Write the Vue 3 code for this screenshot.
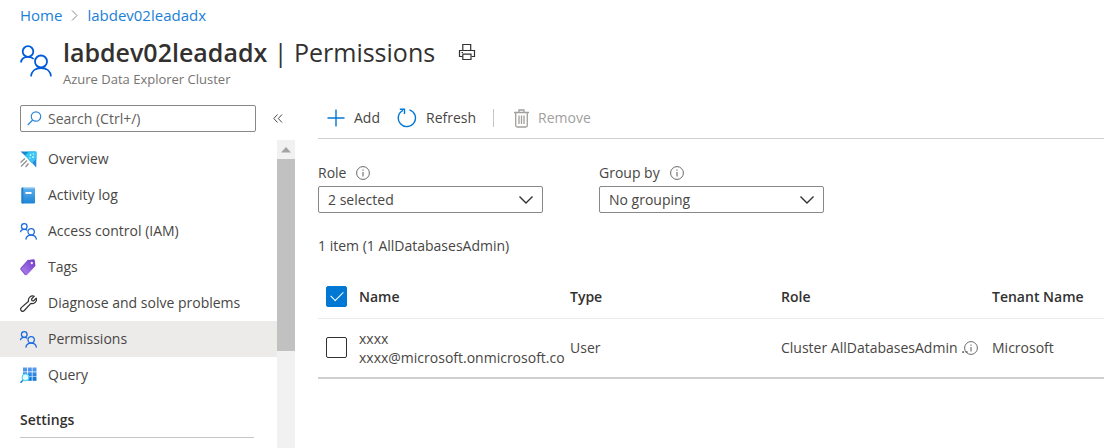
<script setup>
import { ref } from 'vue'

const nav = [
  { label: 'Overview', icon: 'overview' },
  { label: 'Activity log', icon: 'log' },
  { label: 'Access control (IAM)', icon: 'people' },
  { label: 'Tags', icon: 'tag' },
  { label: 'Diagnose and solve problems', icon: 'wrench' },
  { label: 'Permissions', icon: 'people', active: true },
  { label: 'Query', icon: 'query' },
]
const allChecked = ref(true)
const rowChecked = ref(false)
</script>

<template>
  <div class="page">
    <svg class="defs" width="0" height="0" aria-hidden="true">
      <defs>
        <linearGradient id="gBook" x1="0" y1="0" x2="0" y2="1">
          <stop offset="0" stop-color="#5fb0ee" /><stop offset="1" stop-color="#1c86d8" />
        </linearGradient>
        <linearGradient id="gTag" x1="1" y1="0" x2="0" y2="1">
          <stop offset="0" stop-color="#6f35c9" /><stop offset="1" stop-color="#b38af0" />
        </linearGradient>
        <linearGradient id="gGrid" x1="0" y1="0" x2="0" y2="1">
          <stop offset="0" stop-color="#5c9cf0" /><stop offset="1" stop-color="#0a74d4" />
        </linearGradient>
        <symbol id="people" viewBox="0 0 32 32">
          <g fill="none" stroke="currentColor">
            <circle cx="8" cy="6.5" r="5.3" />
            <path d="M1 17.5C1.3 13.5 4.3 11.8 8 11.8c2.300 0 4.400.700 5.700 2.200" />
            <circle cx="21" cy="16.500" r="6" />
            <path d="M11 31.300c.600-5.300 4.700-8.300 10-8.300s9.400 3 10 8.300" />
          </g>
        </symbol>
        <symbol id="info" viewBox="0 0 14 14">
          <circle cx="7" cy="7" r="6.400" fill="none" stroke="currentColor" stroke-width="1" />
          <path d="M7 6v4.500M7 3.500v1.300" stroke="currentColor" stroke-width="1.100" />
        </symbol>
        <symbol id="chevron" viewBox="0 0 14 8">
          <path d="M.5.500 7 7 13.500.500" fill="none" stroke="#323130" stroke-width="1.400" />
        </symbol>
      </defs>
    </svg>

    <header class="head">
      <nav class="crumbs" aria-label="Breadcrumb">
        <a href="#">Home</a>
        <svg width="7" height="11" viewBox="0 0 7 11"><path d="M1 .5 6 5.500 1 10.500" fill="none" stroke="#8a8886" /></svg>
        <a href="#">labdev02leadadx</a>
      </nav>
      <div class="titlebar">
        <svg class="title-icon" width="32" height="32"><use href="#people" /></svg>
        <div>
          <div class="title-row">
            <h1><b>labdev02leadadx</b> | Permissions</h1>
            <button class="plain" aria-label="Print">
              <svg width="18" height="18" viewBox="0 0 18 18" fill="none" stroke="#323130" stroke-width="1.200">
                <path d="M4.800 7.500V1.500h7.900v6M4.500 13.500H1.500v-6h15v6h-3" />
                <path d="M4.800 11.200h8.200v5.300H4.800zM3.500 9.500h1.500" />
              </svg>
            </button>
          </div>
          <p class="subtitle">Azure Data Explorer Cluster</p>
        </div>
      </div>
    </header>

    <div class="body">
      <aside class="side">
        <div class="search-row">
          <label class="search">
            <svg width="15" height="15" viewBox="0 0 15 15" fill="none" stroke="#2b88d8" stroke-width="1.200">
              <circle cx="9" cy="5.500" r="4.700" /><path d="M5.700 9 .7 14" />
            </svg>
            <input type="text" placeholder="Search (Ctrl+/)" aria-label="Search" />
          </label>
          <button class="plain" aria-label="Collapse menu">
            <svg width="10" height="9" viewBox="0 0 10 9" fill="none" stroke="#484644">
              <path d="M4.500.5.800 4.500l3.700 4M9 .5 5.300 4.500 9 8.500" />
            </svg>
          </button>
        </div>
        <div class="menu">
          <div class="menu-list">
            <ul>
              <li v-for="n in nav" :key="n.label">
                <a href="#" class="item" :class="{ active: n.active }">
                  <svg v-if="n.icon === 'overview'" width="17" height="17" viewBox="0 0 17 17">
                    <path d="M.5.500H16L8.500 8z" fill="#1b87cf" />
                    <path d="M5 4.500 9 .500h7.300v7.700L12 12z" fill="#32c8f2" />
                    <path d="M16.300 1v15.500L8.500 8.200z" fill="#2489d8" />
                    <path d="m8.500 8.200 7.800-7.700v7.200l-4.200 4.500z" fill="#39c4f4" />
                    <g fill="#d5f6ff"><circle cx="10.500" cy="4" r=".9" /><circle cx="13.500" cy="3" r=".8" /><circle cx="13" cy="6" r=".9" /><circle cx="10" cy="7" r=".8" /></g>
                    <path d="M.5 11.500 5 7.500M1 15.500l6-6M5.500 16l3-3.500" stroke="#949494" stroke-width="1.400" />
                  </svg>
                  <svg v-else-if="n.icon === 'log'" width="17" height="17" viewBox="0 0 17 17">
                    <rect x="1.500" y=".5" width="13.500" height="16" rx="1" fill="url(#gBook)" />
                    <path d="M1.500 1.500v14q0 1 1 1h.8V.5h-.8q-1 0-1 1z" fill="#1f7fc8" />
                    <path d="M3.300 1h11" stroke="#a9d5f5" />
                    <rect x="5.500" y="5" width="6" height="2" fill="#fff" />
                  </svg>
                  <svg v-else-if="n.icon === 'people'" class="blue" width="17" height="17"><use href="#people" /></svg>
                  <svg v-else-if="n.icon === 'tag'" width="17" height="17" viewBox="0 0 17 17">
                    <path d="M8.500.900 13.500.300q1-.1 1.200.9l.7 5q.1.800-.5 1.400L7 15.900q-.7.700-1.400 0L1.200 10.600q-.6-.7 0-1.400z" fill="url(#gTag)" />
                    <path d="M8.500.900 1.200 9.200q-.6.700 0 1.400L5.600 15.900" fill="none" stroke="#8650cc" stroke-width="1.200" />
                    <circle cx="11.800" cy="4" r="1.200" fill="#f3eafd" />
                  </svg>
                  <svg v-else-if="n.icon === 'wrench'" width="17" height="17" viewBox="0 0 17 17">
                    <path d="M14.300 1.200 11.600 4l.3 1.700 1.600.3 2.700-2.800c1 3.400-1.700 6.200-5.300 5.200l-6.600 7.100c-2 2.100-4.900-.600-3-2.900l7.300-6.300C7.600 3 10.800.100 14.300 1.200z" fill="none" stroke="#323130" stroke-width="1.200" stroke-linejoin="round" />
                  </svg>
                  <svg v-else width="17" height="17" viewBox="0 0 17 17">
                    <path d="M3 .5h4v4H3zM7.800.5h4v4h-4zM12.500.5h4v4h-4zM3 5.200h4v4H3zM7.800 5.200h4v4h-4zM12.500 5.200h4v4h-4zM7.800 9.800h4v4h-4zM12.500 9.800h4v4h-4z" fill="url(#gGrid)" />
                    <path d="M3.500 12.500.5 15.800" stroke="#1b7fd0" stroke-width="1.500" />
                    <circle cx="5.500" cy="10.300" r="3.300" fill="#e8fbff" stroke="#50d8f5" stroke-width="1.200" />
                  </svg>
                  <span>{{ n.label }}</span>
                </a>
              </li>
            </ul>
            <h2>Settings</h2>
          </div>
          <div class="scrollbar" aria-hidden="true">
            <div class="arrow"><svg width="10" height="6" viewBox="0 0 10 6"><path d="M0 5.500 5 0l5 5.500z" fill="#a3a3a3" /></svg></div>
            <div class="thumb"></div>
          </div>
        </div>
      </aside>

      <main class="main">
        <div class="toolbar">
          <button class="cmd">
            <svg width="18" height="18" viewBox="0 0 18 18"><path d="M9 .5v17M.5 9h17" stroke="#0078d4" stroke-width="1.400" /></svg>
            <span>Add</span>
          </button>
          <button class="cmd">
            <svg width="20" height="20" viewBox="0 0 20 20" fill="none" stroke="#0078d4" stroke-width="1.400">
              <path d="M12.500 1.800A8.600 8.600 0 1 1 6 2.300M2.800 1.200h4.700v4.700" />
            </svg>
            <span>Refresh</span>
          </button>
          <span class="divider"></span>
          <button class="cmd" disabled>
            <svg width="15" height="19" viewBox="0 0 15 19" fill="none" stroke="#a19f9d" stroke-width="1.300">
              <path d="M0 3.500h15M5 3.500V1h5v2.500M1.700 3.500v13q0 1.500 1.500 1.500h8.600q1.500 0 1.500-1.500v-13M5 6.500v8.500M7.500 6.500v8.500M10 6.500v8.500" />
            </svg>
            <span>Remove</span>
          </button>
        </div>

        <div class="filters">
          <div class="field">
            <div class="label-row"><label for="role">Role</label><svg class="info" width="14" height="14"><use href="#info" /></svg></div>
            <div class="select">
              <select id="role"><option>2 selected</option></select>
              <svg width="14" height="8"><use href="#chevron" /></svg>
            </div>
          </div>
          <div class="field">
            <div class="label-row"><label for="group">Group by</label><svg class="info" width="14" height="14"><use href="#info" /></svg></div>
            <div class="select">
              <select id="group"><option>No grouping</option></select>
              <svg width="14" height="8"><use href="#chevron" /></svg>
            </div>
          </div>
        </div>

        <p class="count">1 item (1 AllDatabasesAdmin)</p>

        <table>
          <colgroup><col class="c-check" /><col class="c-data" /><col class="c-data" /><col class="c-data" /><col /></colgroup>
          <thead>
            <tr>
              <th><input v-model="allChecked" type="checkbox" aria-label="Select all" /></th>
              <th>Name</th><th>Type</th><th>Role</th><th>Tenant Name</th>
            </tr>
          </thead>
          <tbody>
            <tr>
              <td><input v-model="rowChecked" type="checkbox" aria-label="Select xxxx" /></td>
              <td class="name">xxxx<br />xxxx@microsoft.onmicrosoft.co</td>
              <td>User</td>
              <td>
                <div class="role">
                  <span>Cluster AllDatabasesAdmin ..</span>
                  <svg class="info" width="14" height="14"><use href="#info" /></svg>
                </div>
              </td>
              <td>Microsoft</td>
            </tr>
          </tbody>
        </table>
      </main>
    </div>
  </div>
</template>

<style>
body {
  margin: 0;
  background: #fff;
}
</style>

<style scoped>
.page {
  height: 100vh;
  display: flex;
  flex-direction: column;
  overflow: hidden;
  font: 14px/20px "Open Sans", "Noto Sans", sans-serif;
  color: #484644;
}
.page * {
  box-sizing: border-box;
}
.defs {
  position: absolute;
}
svg {
  flex: none;
  display: block;
}
a {
  text-decoration: none;
}
button,
input,
select {
  font: inherit;
  color: inherit;
}
.head {
  padding: 5px 20px 0;
}
.crumbs {
  display: flex;
  align-items: center;
  gap: 9px;
  font-size: 15px;
}
.crumbs a {
  color: #1a80d8;
}
.titlebar {
  display: flex;
  gap: 11px;
  padding-top: 11px;
}
.title-icon {
  margin-top: 9px;
  color: #015cda;
  stroke-width: 1.8;
}
.title-row {
  display: flex;
  align-items: center;
  gap: 23px;
}
h1 {
  margin: 0;
  font-size: 25px;
  line-height: 32px;
  font-weight: 400;
  color: #323130;
}
h1 b {
  font-weight: 600;
}
.plain {
  padding: 0;
  border: 0;
  background: none;
}
.subtitle {
  margin: 0;
  padding-top: 1px;
  font-size: 13px;
  color: #767472;
}
.body {
  flex: 1;
  min-height: 0;
  display: flex;
  gap: 23px;
  padding-top: 16px;
}
.side {
  width: 295px;
  flex: none;
  display: flex;
  flex-direction: column;
}
.search-row {
  display: flex;
  align-items: center;
  gap: 17px;
  padding-left: 20px;
}
.search {
  display: flex;
  align-items: center;
  gap: 6px;
  width: 236px;
  height: 27px;
  padding: 0 6px;
  border: 1px solid #8a8886;
  border-radius: 2px;
}
.search input {
  flex: 1;
  min-width: 0;
  padding: 0;
  border: 0;
  outline: 0;
  background: none;
}
.search input::placeholder {
  color: #605e5c;
  opacity: 1;
}
.menu {
  flex: 1;
  min-height: 0;
  display: flex;
  margin-top: 8px;
}
.menu-list {
  flex: 1;
  overflow: hidden;
}
ul {
  list-style: none;
  margin: 0;
  padding: 1px 0 0;
}
.item {
  display: flex;
  align-items: center;
  gap: 11px;
  height: 36px;
  padding-left: 20px;
  color: inherit;
}
.item.active {
  background: #edebe9;
}
.blue {
  color: #1a6ae0;
  stroke-width: 2.4;
}
h2 {
  margin: 17px 23px 0 20px;
  padding-bottom: 7px;
  border-bottom: 1px solid #c8c6c4;
  font-size: 14px;
  line-height: 20px;
  font-weight: 600;
  color: #323130;
}
.scrollbar {
  width: 18px;
  background: #f1f1f1;
}
.arrow {
  height: 19px;
  display: flex;
  align-items: center;
  justify-content: center;
}
.thumb {
  height: 192px;
  background: #c1c1c1;
}
.main {
  flex: 1;
  min-width: 0;
}
.toolbar {
  display: flex;
  align-items: center;
  height: 34px;
  padding: 0 0 7px 9px;
  border-bottom: 1px solid #d2d0ce;
}
.cmd {
  display: flex;
  align-items: center;
  gap: 9px;
  margin-right: 17px;
  padding: 0;
  border: 0;
  background: none;
}
.cmd:disabled {
  color: #a19f9d;
}
.divider {
  width: 1px;
  height: 18px;
  margin-right: 20px;
  background: #c8c6c4;
}
.filters {
  display: flex;
  gap: 56px;
  padding-top: 23px;
}
.field {
  width: 225px;
}
.label-row {
  display: flex;
  align-items: center;
  gap: 10px;
  height: 21px;
  margin-bottom: 3px;
}
.info {
  color: #6b6967;
}
.select {
  position: relative;
}
.select select {
  display: block;
  width: 100%;
  height: 27px;
  padding: 0 9px;
  border: 1px solid #8a8886;
  border-radius: 2px;
  background: #fff;
  appearance: none;
}
.select svg {
  position: absolute;
  right: 10px;
  top: 10px;
  pointer-events: none;
}
.count {
  margin: 23px 0 20px;
}
table {
  width: 100%;
  table-layout: fixed;
  border-collapse: collapse;
  border-bottom: 2px solid #d2d0ce;
}
.c-check {
  width: 41px;
}
.c-data {
  width: 211px;
}
th,
td {
  padding: 0;
  text-align: left;
  vertical-align: middle;
}
th {
  height: 42px;
  font-weight: 600;
  color: #323130;
  border-bottom: 1px solid #edebe9;
}
td {
  height: 60px;
}
.name {
  line-height: 19px;
  white-space: nowrap;
}
.role {
  display: flex;
  align-items: center;
  width: 197px;
}
.role span {
  flex: 1;
  min-width: 0;
  white-space: nowrap;
}
input[type="checkbox"] {
  display: block;
  width: 21px;
  height: 21px;
  margin: 0 0 0 8px;
  appearance: none;
  border: 1px solid #323130;
  border-radius: 2px;
  background: #fff;
}
input[type="checkbox"]:checked {
  display: grid;
  place-items: center;
  border-color: #0078d4;
  background: #0078d4;
}
input[type="checkbox"]:checked::after {
  content: "";
  width: 11px;
  height: 6px;
  margin-bottom: 4px;
  border: solid #fff;
  border-width: 0 0 1px 1px;
  transform: rotate(-45deg);
}
</style>
